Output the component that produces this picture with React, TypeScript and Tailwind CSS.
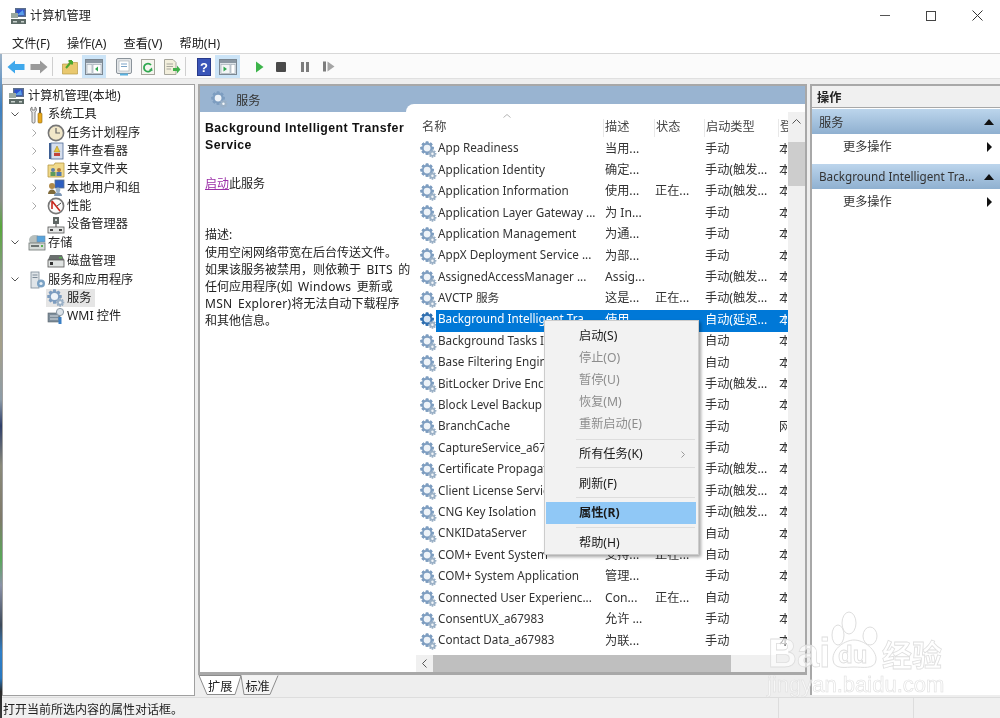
import React from "react";

const FONT = "font-['Noto_Sans','Noto_Sans_CJK_SC',sans-serif]";

function Gear({ size = 18, dark = false }: { size?: number; dark?: boolean }) {
  const a = dark ? "#2f6fb0" : "#7d9dc0";
  const b = dark ? "#d8e6f5" : "#eef3f8";
  const teeth = [0, 45, 90, 135, 180, 225, 270, 315];
  return (
    <svg width={size} height={size} viewBox="0 0 18 18" className="shrink-0">
      <g>
        {teeth.map((t) => (
          <rect key={t} x="6" y="0.5" width="3" height="14" rx="0.6" fill={a} transform={`rotate(${t} 7.5 7.5)`} />
        ))}
        <circle cx="7.5" cy="7.5" r="5.4" fill={a} />
        <circle cx="7.5" cy="7.5" r="3.6" fill={b} />
      </g>
      <g>
        {teeth.map((t) => (
          <rect key={t} x="12.4" y="9.5" width="1.6" height="8" fill="#9ab0c6" transform={`rotate(${t} 13.2 13.5)`} />
        ))}
        <circle cx="13.2" cy="13.5" r="2.9" fill="#9ab0c6" />
        <circle cx="13.2" cy="13.5" r="1.3" fill="#f2f5f8" />
      </g>
    </svg>
  );
}

function ComputerIcon() {
  return (
    <svg width="18" height="18" viewBox="0 0 18 18" className="shrink-0">
      <rect x="5" y="1" width="11" height="9" fill="#5b6f8c" />
      <rect x="6.5" y="2.5" width="8" height="6" fill="#2c4fd0" />
      <path d="M7 8 L13 3 L14 8Z" fill="#5aa0e8" />
      <rect x="1" y="6" width="7" height="5" fill="#9aa8a0" />
      <rect x="1" y="12" width="15" height="5" fill="#5c6a66" />
      <rect x="3" y="14" width="4" height="1.5" fill="#c7d0cc" />
      <rect x="11" y="14" width="3" height="1.5" fill="#c7d0cc" />
    </svg>
  );
}

function TreeIcon({ kind }: { kind: string }) {
  switch (kind) {
    case "tools":
      return (
        <svg width="18" height="18" viewBox="0 0 18 18" className="shrink-0">
          <path d="M4 1 C2 2 2 5 4 6 L4 16 C4 17.5 7 17.5 7 16 L7 6 C9 5 9 2 7 1 L7 4 L4 4Z" fill="#e6e6e6" stroke="#666" strokeWidth="0.8" />
          <rect x="11" y="1" width="2" height="6" fill="#555" />
          <rect x="10" y="7" width="4" height="10" rx="1" fill="#e9a81c" stroke="#8a6410" strokeWidth="0.6" />
        </svg>
      );
    case "clock":
      return (
        <svg width="18" height="18" viewBox="0 0 18 18" className="shrink-0">
          <circle cx="9" cy="9" r="7.6" fill="#f1e7c9" stroke="#767676" strokeWidth="1.6" />
          <path d="M9 4 V9 H13" stroke="#666" strokeWidth="1.2" fill="none" />
        </svg>
      );
    case "event":
      return (
        <svg width="18" height="18" viewBox="0 0 18 18" className="shrink-0">
          <rect x="2" y="1" width="3" height="16" fill="#3d5f93" />
          <rect x="4" y="1" width="12" height="16" fill="#d6dfee" stroke="#4f6a96" strokeWidth="0.8" />
          <path d="M10 4 L13 10 H7Z" fill="#e8c53a" stroke="#9c7d10" strokeWidth="0.5" />
          <rect x="7" y="11" width="6" height="3" fill="#c2413a" />
        </svg>
      );
    case "share":
      return (
        <svg width="18" height="18" viewBox="0 0 18 18" className="shrink-0">
          <path d="M1 4 H7 L8 2 H17 V16 H1Z" fill="#f0d98a" stroke="#b89b45" strokeWidth="0.8" />
          <circle cx="6" cy="9" r="2" fill="#5d7fa8" />
          <rect x="3.5" y="11" width="5" height="4" fill="#5c9a5c" />
          <circle cx="12" cy="9" r="2" fill="#b3793c" />
          <rect x="9.5" y="11" width="5" height="4" fill="#4e77b0" />
        </svg>
      );
    case "users":
      return (
        <svg width="18" height="18" viewBox="0 0 18 18" className="shrink-0">
          <rect x="8" y="1" width="9" height="8" fill="#2f5fc0" stroke="#5b6f8c" strokeWidth="0.8" />
          <circle cx="5" cy="7" r="3" fill="#b08a4a" />
          <path d="M1 15 C1 9 9 9 9 15Z" fill="#7f6a3a" />
          <circle cx="11" cy="11" r="2.4" fill="#9cb2c9" />
          <path d="M7 17 C7 12 15 12 15 17Z" fill="#7d97b5" />
        </svg>
      );
    case "perf":
      return (
        <svg width="18" height="18" viewBox="0 0 18 18" className="shrink-0">
          <circle cx="9" cy="9" r="7.6" fill="#fbfbfb" stroke="#777" strokeWidth="1.6" />
          <path d="M5 4 L13 14 M5 4 V12" stroke="#c8281e" strokeWidth="1.6" fill="none" />
          <path d="M14 6 L10 9" stroke="#444" strokeWidth="1" />
        </svg>
      );
    case "device":
      return (
        <svg width="18" height="18" viewBox="0 0 18 18" className="shrink-0">
          <rect x="6" y="1" width="6" height="7" fill="#5e6563" />
          <rect x="8" y="3" width="2" height="2" fill="#cfd6d3" />
          <path d="M9 8 V11" stroke="#444" />
          <rect x="1" y="11" width="16" height="6" fill="#e4e6e5" stroke="#555" strokeWidth="0.8" />
          <rect x="3" y="13" width="3" height="2" fill="#444" />
          <rect x="12" y="13" width="3" height="2" fill="#444" />
        </svg>
      );
    case "storage":
      return (
        <svg width="18" height="18" viewBox="0 0 18 18" className="shrink-0">
          <ellipse cx="7" cy="6" rx="6" ry="5" fill="#b7bfbd" />
          <rect x="9" y="2" width="8" height="6" fill="#58a4dc" stroke="#6f8aa4" strokeWidth="0.6" />
          <rect x="1" y="9" width="16" height="7" fill="#d5dbd8" stroke="#6b7371" strokeWidth="0.8" />
          <rect x="3" y="11" width="8" height="2" fill="#6b7371" />
          <rect x="13" y="11" width="2" height="2" fill="#58b050" />
        </svg>
      );
    case "disk":
      return (
        <svg width="18" height="18" viewBox="0 0 18 18" className="shrink-0">
          <path d="M3 3 H15 L17 8 H1Z" fill="#6a6f6e" />
          <rect x="1" y="8" width="16" height="7" fill="#e0e3e2" stroke="#555" strokeWidth="0.8" />
          <rect x="3" y="10" width="3" height="3" fill="#333" />
          <rect x="12" y="5" width="3" height="1.4" fill="#58b050" />
        </svg>
      );
    case "apps":
      return (
        <svg width="18" height="18" viewBox="0 0 18 18" className="shrink-0">
          <rect x="3" y="1" width="8" height="16" fill="#dfe4e8" stroke="#7c8a97" strokeWidth="0.8" />
          <path d="M4.5 4 H9.5 M4.5 6.5 H9.5" stroke="#7c8a97" />
          <circle cx="13" cy="12.5" r="4" fill="#7ba2c4" />
          <circle cx="13" cy="12.5" r="1.6" fill="#e7eff6" />
        </svg>
      );
    case "wmi":
      return (
        <svg width="18" height="18" viewBox="0 0 18 18" className="shrink-0">
          <rect x="1" y="6" width="12" height="9" fill="#7d8c99" stroke="#59646d" strokeWidth="0.6" />
          <path d="M3 9 H11 M3 12 H11" stroke="#d9dfe4" />
          <circle cx="13" cy="5" r="3.6" fill="#dbe2e8" stroke="#8a98a5" />
          <path d="M13 10 V17" stroke="#3b7fc4" strokeWidth="3" />
        </svg>
      );
    default:
      return <Gear size={18} />;
  }
}

const tree: { label: string; depth: number; chev?: "d" | "r"; kind: string; sel?: boolean }[] = [
  { label: "计算机管理(本地)", depth: 0, kind: "computer" },
  { label: "系统工具", depth: 1, chev: "d", kind: "tools" },
  { label: "任务计划程序", depth: 2, chev: "r", kind: "clock" },
  { label: "事件查看器", depth: 2, chev: "r", kind: "event" },
  { label: "共享文件夹", depth: 2, chev: "r", kind: "share" },
  { label: "本地用户和组", depth: 2, chev: "r", kind: "users" },
  { label: "性能", depth: 2, chev: "r", kind: "perf" },
  { label: "设备管理器", depth: 2, kind: "device" },
  { label: "存储", depth: 1, chev: "d", kind: "storage" },
  { label: "磁盘管理", depth: 2, kind: "disk" },
  { label: "服务和应用程序", depth: 1, chev: "d", kind: "apps" },
  { label: "服务", depth: 2, kind: "gear", sel: true },
  { label: "WMI 控件", depth: 2, kind: "wmi" },
];

const services: [string, string, string, string, string][] = [
  ["App Readiness", "当用...", "", "手动", "本"],
  ["Application Identity", "确定...", "", "手动(触发...", "本"],
  ["Application Information", "使用...", "正在...", "手动(触发...", "本"],
  ["Application Layer Gateway ...", "为 In...", "", "手动", "本"],
  ["Application Management", "为通...", "", "手动", "本"],
  ["AppX Deployment Service ...", "为部...", "", "手动", "本"],
  ["AssignedAccessManager ...", "Assig...", "", "手动(触发...", "本"],
  ["AVCTP 服务", "这是...", "正在...", "手动(触发...", "本"],
  ["Background Intelligent Tra...", "使用...", "", "自动(延迟...", "本"],
  ["Background Tasks Infrastr...", "", "", "自动", "本"],
  ["Base Filtering Engine", "", "", "自动", "本"],
  ["BitLocker Drive Encryption...", "", "", "手动(触发...", "本"],
  ["Block Level Backup Engine...", "", "", "手动", "本"],
  ["BranchCache", "", "", "手动", "网"],
  ["CaptureService_a67983", "", "", "手动", "本"],
  ["Certificate Propagation", "", "", "手动(触发...", "本"],
  ["Client License Service (Cli...", "", "", "手动(触发...", "本"],
  ["CNG Key Isolation", "", "", "手动(触发...", "本"],
  ["CNKIDataServer", "", "", "自动", "本"],
  ["COM+ Event System", "支持...", "正在...", "自动", "本"],
  ["COM+ System Application", "管理...", "", "手动", "本"],
  ["Connected User Experienc...", "Con...", "正在...", "自动", "本"],
  ["ConsentUX_a67983", "允许 ...", "", "手动", "本"],
  ["Contact Data_a67983", "为联...", "", "手动", "本"],
  ["CoreMessaging", "", "", "自动", "本"],
];

function MenuItem({ text, off, bold }: { text: string; off?: boolean; bold?: boolean }) {
  return (
    <div className={`h-[22px] pl-[33px] flex items-center ${off ? "text-[#8d8d8d]" : "text-[#1a1a1a]"} ${bold ? "font-bold" : ""}`}>{text}</div>
  );
}

function Sep() {
  return <div className="h-px bg-[#dddddd] ml-[30px] mr-[2px]" />;
}

function ToolBtn({ on, children, w = "w-[24px]" }: { on?: boolean; children: React.ReactNode; w?: string }) {
  return <div className={`${w} h-[23px] shrink-0 flex items-center justify-center ${on ? "bg-[#cce4f7]" : ""}`}>{children}</div>;
}

function Panel({ right }: { right?: boolean }) {
  return (
    <svg width="18" height="16" viewBox="0 0 18 16">
      <rect x="0.5" y="0.5" width="17" height="15" fill="#dde3e8" stroke="#7c8791" />
      <rect x="1" y="1" width="16" height="3" fill="#8b97a2" />
      {right ? (
        <>
          <rect x="2" y="5.5" width="9" height="9" fill="#f3f5f6" stroke="#9aa5ae" strokeWidth="0.6" />
          <rect x="12" y="5.5" width="4" height="9" fill="#fff" stroke="#9aa5ae" strokeWidth="0.6" />
          <path d="M4.5 7.5 L8 10 L4.5 12.5Z" fill="#2fa84f" />
        </>
      ) : (
        <>
          <rect x="2" y="5.5" width="5" height="9" fill="#f3f5f6" stroke="#9aa5ae" strokeWidth="0.6" />
          <rect x="8" y="5.5" width="8" height="9" fill="#fff" stroke="#9aa5ae" strokeWidth="0.6" />
          <path d="M13 7.5 L10 10 L13 12.5Z" fill="#2fa84f" />
        </>
      )}
    </svg>
  );
}

const LATIN = "tracking-[0.3px] [word-spacing:2px]";

export default function App() {
  return (
    <div className={`${FONT} relative w-[1000px] h-[718px] overflow-hidden flex flex-col bg-[#eeeeee] text-[12.2px] leading-none text-[#222222] blur-[0.45px]`}>
      {/* title bar */}
      <div className="h-[33px] shrink-0 bg-white flex items-center pl-[10px] pb-[2px]">
        <ComputerIcon />
        <span className="ml-[2px] pt-[1px]">计算机管理</span>
        <div className="ml-auto flex items-center">
          <div className="w-[46px] flex justify-center"><div className="w-[10px] h-px bg-[#555]" /></div>
          <div className="w-[46px] flex justify-center"><div className="w-[10px] h-[10px] border border-[#444]" /></div>
          <div className="w-[46px] flex justify-center">
            <svg width="11" height="11" viewBox="0 0 11 11"><path d="M0.5 0.5 L10.5 10.5 M10.5 0.5 L0.5 10.5" stroke="#333" /></svg>
          </div>
        </div>
      </div>
      {/* menu */}
      <div className="h-[21px] shrink-0 bg-white border-b border-[#d8d8d8] flex items-center pl-[12px] pt-[2px] gap-[17px]">
        <span>文件(F)</span><span>操作(A)</span><span>查看(V)</span><span>帮助(H)</span>
      </div>
      {/* toolbar */}
      <div className="h-[25px] shrink-0 bg-[#fbfbfb] flex items-center pl-[4px] pt-[1px] border-b border-[#e0e0e0]">
        <ToolBtn w="w-[23px]">
          <svg width="18" height="14" viewBox="0 0 18 14"><path d="M0.5 7 L8 0.5 V4 H17.5 V10 H8 V13.5Z" fill="#3fa8ec" /></svg>
        </ToolBtn>
        <ToolBtn w="w-[23px]">
          <svg width="18" height="14" viewBox="0 0 18 14"><path d="M17.5 7 L10 0.5 V4 H0.5 V10 H10 V13.5Z" fill="#9a9a9a" /></svg>
        </ToolBtn>
        <div className="w-px h-[19px] bg-[#cfcfcf] ml-[2px] mr-[7px]" />
        <ToolBtn w="w-[20px]">
          <svg width="16" height="16" viewBox="0 0 16 16"><path d="M0.5 5 H6 L7 3.5 H15.5 V15 H0.5Z" fill="#e9c86e" stroke="#b89b45" strokeWidth="0.7" /><path d="M4 9 L10 2 M10 2 H6.5 M10 2 V5.5" stroke="#4aa82f" strokeWidth="2" fill="none" /></svg>
        </ToolBtn>
        <div className="w-[2px]" />
        <ToolBtn on w="w-[24px]"><Panel /></ToolBtn>
        <div className="w-[6px]" />
        <ToolBtn w="w-[24px]">
          <svg width="16" height="18" viewBox="0 0 16 18"><rect x="0.5" y="0.5" width="15" height="15" rx="1.5" fill="#e3e6e8" stroke="#8b939a" /><rect x="3" y="3" width="10" height="10" fill="#fff" stroke="#a5adb3" strokeWidth="0.6" /><path d="M5 6 H11 M5 8.5 H11" stroke="#7aa3c8" /><rect x="4" y="15.5" width="8" height="2" fill="#5ab2e0" /></svg>
        </ToolBtn>
        <ToolBtn w="w-[24px]">
          <svg width="16" height="16" viewBox="0 0 16 16"><rect x="1.5" y="0.5" width="13" height="15" fill="#f5f5ef" stroke="#a6a69c" /><path d="M11 6 A4 4 0 1 0 11.5 10.5" stroke="#2fa84f" strokeWidth="1.8" fill="none" /><path d="M12.5 12 L9 11 L12 8.5Z" fill="#2fa84f" /></svg>
        </ToolBtn>
        <ToolBtn w="w-[23px]">
          <svg width="18" height="16" viewBox="0 0 18 16"><path d="M1.5 0.5 H10 L13 3.5 V15.5 H1.5Z" fill="#f3efdc" stroke="#a6a69c" /><path d="M3.5 5 H10 M3.5 7.5 H10 M3.5 10 H8" stroke="#a6a69c" /><path d="M10 9 H14 V6.5 L17.5 10.5 L14 14.5 V12 H10Z" fill="#42b04a" /></svg>
        </ToolBtn>
        <div className="w-px h-[19px] bg-[#cfcfcf] ml-[2px] mr-[9px]" />
        <ToolBtn w="w-[17px]">
          <svg width="14" height="18" viewBox="0 0 14 18"><rect x="0.5" y="0.5" width="13" height="17" fill="#3a55b8" stroke="#27398a" /><text x="7" y="14" textAnchor="middle" fontSize="13" fontWeight="bold" fill="#fff" fontFamily="Liberation Sans">?</text></svg>
        </ToolBtn>
        <div className="w-[3px]" />
        <ToolBtn on w="w-[25px]"><Panel right /></ToolBtn>
        <div className="w-[7px]" />
        <ToolBtn w="w-[24px]"><svg width="9" height="12" viewBox="0 0 9 12"><path d="M1 0.5 L8.5 6 L1 11.5Z" fill="#3cb44a" /></svg></ToolBtn>
        <ToolBtn w="w-[20px]"><div className="w-[10px] h-[10px] rounded-[1px] bg-[#4a4a4a]" /></ToolBtn>
        <ToolBtn w="w-[28px]"><div className="flex gap-[2px]"><div className="w-[3px] h-[10px] bg-[#7d7d7d]" /><div className="w-[3px] h-[10px] bg-[#7d7d7d]" /></div></ToolBtn>
        <ToolBtn w="w-[20px]"><svg width="12" height="11" viewBox="0 0 12 11"><rect x="0" y="0.5" width="3" height="10" fill="#7d7d7d" /><path d="M4.5 0.5 L11.5 5.5 L4.5 10.5Z" fill="#a5a5a5" /></svg></ToolBtn>
      </div>

      {/* body */}
      <div className="flex-1 min-h-0 flex pt-[5px] pl-[2px]">
        {/* tree */}
        <div className="w-[193px] shrink-0 mb-px bg-white border border-[#a0a0a0] pt-[2px]">
          {tree.map((t, i) => (
            <div key={i} className="h-[18.35px] flex items-center" style={{ paddingLeft: t.depth === 0 ? 4 : 3 + (t.depth - 1) * 19 }}>
              {t.depth > 0 && (
                <span className="w-[18px] shrink-0 flex items-center justify-center mr-[3px]">
                  {t.chev === "d" && (
                    <svg width="8" height="5" viewBox="0 0 8 5"><path d="M0.5 0.5 L4 4 L7.5 0.5" stroke="#555" fill="none" /></svg>
                  )}
                  {t.chev === "r" && (
                    <svg width="5" height="8" viewBox="0 0 5 8"><path d="M0.5 0.5 L4 4 L0.5 7.5" stroke="#aaa" fill="none" /></svg>
                  )}
                </span>
              )}
              <span className={`flex items-center h-[18px] pl-[1px] ${t.sel ? "bg-[#e5e5e5] pr-[4px]" : ""}`}>
                {t.kind === "computer" ? <ComputerIcon /> : <TreeIcon kind={t.kind} />}
                <span className="ml-[2px] whitespace-nowrap">{t.label}</span>
              </span>
            </div>
          ))}
        </div>

        {/* center */}
        <div className="w-[609px] ml-[3px] shrink-0 flex flex-col">
          <div className="h-[591px] shrink-0 border-2 border-[#a8a8a8] border-b-[3px] bg-white flex flex-col overflow-hidden">
            <div className="h-[26px] shrink-0 bg-[#99b4d1] flex items-center pl-[11px]">
              <Gear size={17} />
              <span className="ml-[8px] pt-[4px] text-[#333]">服务</span>
            </div>
            <div className="flex-1 min-h-0 flex">
              <div className="relative z-10 w-[206px] shrink-0 pl-[5px] pt-[8px] text-[12px]">
                <div className="font-['Liberation_Sans','Noto_Sans_CJK_SC',sans-serif] font-bold leading-[17px] text-[12.3px] tracking-[0.45px] text-[#111]">Background Intelligent Transfer Service</div>
                <div className="mt-[21px] h-[17px] leading-[17px]"><span className="text-[#9b2fa8] underline">启动</span>此服务</div>
                <div className="mt-[34px] leading-[17px]">描述:</div>
                <div className={`mt-px leading-[17px] whitespace-nowrap ${LATIN}`}>
                  <span className="tracking-normal">使用空闲网络带宽在后台传送文件。</span><br />
                  <span className="tracking-normal">如果该服务被禁用，则依赖于</span> BITS <span className="tracking-normal">的</span><br />
                  <span className="tracking-normal">任何应用程序(如</span> Windows <span className="tracking-normal">更新或</span><br />
                  MSN Explorer)<span className="tracking-normal">将无法自动下载程序</span><br />
                  <span className="tracking-normal">和其他信息。</span>
                </div>
              </div>
              <div className="relative flex-1 min-w-0 -mt-[8px] bg-white rounded-tl-[8px] flex flex-col overflow-hidden">
                <svg className="absolute left-[97px] top-[10px]" width="8" height="4" viewBox="0 0 8 4"><path d="M0.5 3.5 L4 0.5 L7.5 3.5" stroke="#b5b5b5" fill="none" /></svg>
                <div className="flex flex-1 min-h-0">
                  <div className="flex-1 min-w-0 overflow-hidden">
                    <div className="h-[29px] flex items-center text-[#444] pt-[18px] shrink-0">
                      <span className="w-[197px] pl-[16px] shrink-0">名称</span>
                      <span className="w-[51px] pl-[1px] shrink-0 border-l border-[#e8e8e8] h-[18px] flex items-center">描述</span>
                      <span className="w-[50px] shrink-0 border-l border-[#e8e8e8] h-[18px] flex items-center pl-[1px]">状态</span>
                      <span className="w-[74px] shrink-0 border-l border-[#e8e8e8] h-[18px] flex items-center pl-[1px]">启动类型</span>
                      <span className="w-[10px] shrink-0 overflow-hidden border-l border-[#e8e8e8] h-[18px] flex items-center pl-[1px] whitespace-nowrap">登录</span>
                    </div>
                    <div className="h-[6px]" />
                    <div className="overflow-hidden">
                      {services.map((s, i) => {
                        const sel = i === 8;
                        return (
                          <div key={i} className="h-[21.4px] flex items-center whitespace-nowrap text-[#333]">
                            <div className="w-[30px] shrink-0 pl-[14px]"><Gear size={17} dark={sel} /></div>
                            <div className={`flex items-center h-[21.4px] flex-1 min-w-0 ${sel ? "bg-[#0078d7] text-white" : ""}`}>
                              <span className="w-[169px] shrink-0 overflow-hidden pl-[2px] pb-[3px] text-[11.7px]">{s[0]}</span>
                              <span className="w-[50px] shrink-0 pb-[2px]">{s[1]}</span>
                              <span className="w-[50px] shrink-0 pb-[2px]">{s[2]}</span>
                              <span className="w-[74px] shrink-0 pb-[2px]">{s[3]}</span>
                              <span className="w-[8px] shrink-0 overflow-hidden pb-[2px]">{s[4]}</span>
                            </div>
                          </div>
                        );
                      })}
                    </div>
                  </div>
                  {/* v scroll */}
                  <div className="w-[17px] shrink-0 mt-[8px] bg-[#f0f0f0] flex flex-col">
                    <div className="h-[30px] pt-[7px] flex items-start justify-center"><svg width="9" height="5" viewBox="0 0 9 5"><path d="M0.5 4.5 L4.5 0.5 L8.5 4.5" stroke="#555" fill="none" /></svg></div>
                    <div className="h-[44px] bg-[#cdcdcd]" />
                  </div>
                </div>
                {/* h scroll */}
                <div className="h-[17px] shrink-0 ml-[10px] bg-[#f0f0f0] flex">
                  <div className="w-[17px] flex items-center justify-center"><svg width="5" height="9" viewBox="0 0 5 9"><path d="M4.5 0.5 L0.5 4.5 L4.5 8.5" stroke="#555" fill="none" /></svg></div>
                  <div className="w-[298px] bg-[#bfbfbf]" />
                </div>
              </div>
            </div>
          </div>
          {/* tabs */}
          <div className="relative h-[21px] flex items-center pl-[10px] gap-[13px] pt-[3px]">
            <svg className="absolute left-0 top-0" width="82" height="21" viewBox="0 0 82 21">
              <path d="M1 0.5 L9 19.5 H37 L43 0.5Z" fill="#ffffff" stroke="#8c8c8c" />
              <path d="M43 0.5 L46 19.5 H72 L80 0.5" fill="#f4f4f4" stroke="#8c8c8c" />
            </svg>
            <span className="relative">扩展</span>
            <span className="relative">标准</span>
          </div>
        </div>

        {/* actions */}
        <div className="flex-1 ml-[3px] mb-[2px] bg-white border-l-2 border-t-2 border-[#a8a8a8] flex flex-col">
          <div className="h-[22px] bg-[#f0f0f0] border-b border-[#a8a8a8] flex items-center pl-[5px] pt-[3px] font-bold text-[#222]">操作</div>
          <div className="h-[25px] mt-[1px] bg-gradient-to-b from-[#bcd5ec] to-[#8fb0d0] flex items-center pl-[7px] pr-[5px] text-[#333]">
            <span className="pt-[3px]">服务</span>
            <svg className="ml-auto" width="12" height="6" viewBox="0 0 12 6"><path d="M6 0 L11 6 H1Z" fill="#111" /></svg>
          </div>
          <div className="h-[30px] flex items-center pl-[31px] pr-[8px] pb-[4px] text-[#333]">
            <span>更多操作</span>
            <svg className="ml-auto" width="5" height="10" viewBox="0 0 5 10"><path d="M0 0 L5 5 L0 10Z" fill="#111" /></svg>
          </div>
          <div className="h-[25px] bg-gradient-to-b from-[#bcd5ec] to-[#8fb0d0] flex items-center pl-[7px] pr-[5px] text-[#333] whitespace-nowrap">
            <span className="text-[11.7px]">Background Intelligent Tra...</span>
            <svg className="ml-auto" width="12" height="6" viewBox="0 0 12 6"><path d="M6 0 L11 6 H1Z" fill="#111" /></svg>
          </div>
          <div className="h-[30px] flex items-center pl-[31px] pr-[8px] pb-[4px] text-[#333]">
            <span>更多操作</span>
            <svg className="ml-auto" width="5" height="10" viewBox="0 0 5 10"><path d="M0 0 L5 5 L0 10Z" fill="#111" /></svg>
          </div>
        </div>
      </div>

      {/* status */}
      <div className="h-[21px] shrink-0 bg-[#f0f0f0] border-t border-[#dddddd] flex items-stretch text-[12px] text-[#222]">
        <div className="w-[779px] flex items-center pl-[3px] pt-[3px] border-r border-[#dddddd]">打开当前所选内容的属性对话框。</div>
        <div className="w-[135px] border-r border-[#dddddd]" />
      </div>

      {/* desktop edge showing at the left of the window */}
      <div className="absolute left-0 top-[54px] bottom-0 w-[2px] bg-[linear-gradient(to_bottom,#9fb4c8_0%,#3d7fc0_8%,#5d8fb8_14%,#8a8f8a_22%,#58a83c_26%,#8f9a8a_34%,#a5a08a_44%,#8d9ca8_52%,#2f3f6a_56%,#8a8a7a_62%,#7f7a6a_70%,#58a858_76%,#8a92a8_80%,#3d4a5a_86%,#2f7fc8_90%,#2878c0_94%,#2a2a2a_96%,#3a3a3a_100%)]" />

      {/* context menu */}
      <div className="absolute left-[544px] top-[320px] w-[155px] h-[235px] bg-[#f2f2f2] border border-[#cccccc] shadow-[2px_2px_3px_rgba(0,0,0,0.35)] pt-[4px] px-[1px]">
        <MenuItem text="启动(S)" />
        <MenuItem text="停止(O)" off />
        <MenuItem text="暂停(U)" off />
        <MenuItem text="恢复(M)" off />
        <MenuItem text="重新启动(E)" off />
        <div className="h-[4px]" /><Sep /><div className="h-[3px]" />
        <div className="relative"><MenuItem text="所有任务(K)" /><svg className="absolute right-[12px] top-[8px]" width="4" height="7" viewBox="0 0 4 7"><path d="M0.5 0.5 L3.5 3.5 L0.5 6.5" stroke="#999" fill="none" /></svg></div>
        <div className="h-[2px]" /><Sep /><div className="h-[5px]" />
        <MenuItem text="刷新(F)" />
        <div className="h-[2px]" /><Sep /><div className="h-[4px]" />
        <div className="bg-[#90c8f6] mr-[1px]"><MenuItem text="属性(R)" bold /></div>
        <div className="h-[3px]" /><Sep /><div className="h-[4px]" />
        <MenuItem text="帮助(H)" />
      </div>

      {/* watermark */}
      <div className="absolute left-[765px] top-[608px] w-[185px] h-[92px] pointer-events-none">
        <svg className="absolute left-[65px] top-[2px]" width="50" height="62" viewBox="0 0 50 62" fill="rgba(255,255,255,0.7)" stroke="#dedede" strokeWidth="1">
          <ellipse cx="8" cy="25" rx="6" ry="10" />
          <ellipse cx="19" cy="13" rx="7" ry="11" />
          <ellipse cx="40" cy="26" rx="7" ry="9" />
          <path d="M3 50 C2 38 16 30 24 30 C34 30 47 40 46 50 C45 60 32 57 24 57 C16 57 4 60 3 50Z" />
        </svg>
        <div className="absolute left-[3px] top-[25px] font-['Liberation_Sans',sans-serif] text-[40px] font-bold leading-none text-white/60 [-webkit-text-stroke:0.8px_#dedede]">Bai</div>
        <div className="absolute left-[73px] top-[35px] font-['Liberation_Sans',sans-serif] text-[24px] font-bold leading-none text-white/60 [-webkit-text-stroke:0.8px_#dedede]">du</div>
        <div className="absolute left-[117px] top-[32px] text-[30px] leading-none font-bold text-white/60 [-webkit-text-stroke:0.8px_#dedede] whitespace-nowrap">经验</div>
        <div className="absolute left-[2px] top-[66px] font-['Liberation_Sans',sans-serif] text-[22px] leading-none text-white/50 [-webkit-text-stroke:0.6px_#e0e0e0] whitespace-nowrap">jingyan.baidu.com</div>
      </div>
    </div>
  );
}
